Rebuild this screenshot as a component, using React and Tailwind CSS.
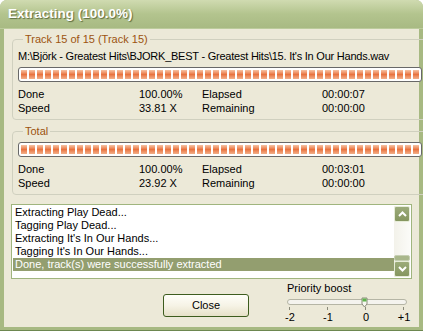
import React from 'react';

const font = { fontFamily: '"Liberation Sans", Arial, sans-serif' };

const ProgressBar = () => (
  <div className="h-[15px] rounded-[3px] border border-[#686868] bg-white p-[2px] overflow-hidden">
    <div className="flex h-full gap-[2px] overflow-hidden">
      {Array.from({ length: 50 }).map((_, i) => (
        <div
          key={i}
          className="w-[6px] h-full shrink-0 bg-gradient-to-b from-[#f6c3a3] via-[#e8733f] to-[#f2b08a]"
        />
      ))}
    </div>
  </div>
);

const StatRows = ({ rows }) => (
  <div className="mt-[5px]">
    {rows.map((r) => (
      <div key={r[0]} className="flex h-[14px] items-center text-[11px] text-black">
        <span className="w-[121px]">{r[0]}</span>
        <span className="w-[63px]">{r[1]}</span>
        <span className="w-[120px]">{r[2]}</span>
        <span>{r[3]}</span>
      </div>
    ))}
  </div>
);

const Group = ({ title, children }) => (
  <fieldset className="rounded-[4px] border border-[#d0d0bf] pl-[5px] pr-[7px] pb-[4px]">
    <legend className="ml-[5px] px-[2px] text-[11px] leading-[13px] text-[#9c5410]">{title}</legend>
    {children}
  </fieldset>
);

const ScrollBtn = ({ down }) => (
  <div className="w-[16px] h-[16px] rounded-[2px] border border-[#e6ecd8] bg-gradient-to-b from-[#9cab7a] to-[#85965f] flex items-center justify-center">
    <svg width="9" height="6" viewBox="0 0 9 6">
      <path
        d={down ? 'M1 1 L4.5 4.5 L8 1' : 'M1 5 L4.5 1.5 L8 5'}
        fill="none"
        stroke="white"
        strokeWidth="2"
      />
    </svg>
  </div>
);

export default function App() {
  const log = [
    'Extracting Play Dead...',
    'Tagging Play Dead...',
    "Extracting It's In Our Hands...",
    "Tagging It's In Our Hands...",
  ];

  return (
    <div style={font} className="w-[423px] h-[331px] flex flex-col bg-[#a7b982] rounded-t-[7px] overflow-hidden border-b border-[#6d8750]">
      {/* Title bar */}
      <div className="h-[29px] shrink-0 flex items-center pl-[8px] bg-gradient-to-b from-[#d0dbb1] via-[#b3c48e] to-[#a8ba83] border-b border-[#bccb9c]">
        <span className="text-[13.5px] font-bold text-white [text-shadow:1px_1px_1px_#5d6b40]">
          Extracting (100.0%)
        </span>
      </div>

      {/* Body */}
      <div className="flex-1 mx-[4px] mb-[3px] bg-[#ece9d8] flex flex-col pt-[4px] pl-[8px] pr-[7px]">
        <Group title="Track 15 of 15 (Track 15)">
          <div className="text-[11px] leading-[13px] text-black mt-[4px] mb-[4px] tracking-[-0.23px] whitespace-nowrap">
            M:\Björk - Greatest Hits\BJORK_BEST - Greatest Hits\15. It's In Our Hands.wav
          </div>
          <ProgressBar />
          <StatRows
            rows={[
              ['Done', '100.00%', 'Elapsed', '00:00:07'],
              ['Speed', '33.81 X', 'Remaining', '00:00:00'],
            ]}
          />
        </Group>

        <div className="mt-[5px]">
          <Group title="Total">
            <div className="mt-[4px]">
              <ProgressBar />
            </div>
            <StatRows
              rows={[
                ['Done', '100.00%', 'Elapsed', '00:03:01'],
                ['Speed', '23.92 X', 'Remaining', '00:00:00'],
              ]}
            />
          </Group>
        </div>

        {/* Log list */}
        <div className="mt-[9px] -ml-[1px] h-[75px] border border-[#a0b57e] bg-white flex">
          <div className="flex-1 pt-[1px] pl-[1px] text-[11px] leading-[13px] text-black">
            {log.map((l) => (
              <div key={l} className="h-[13px] pl-[2px]">{l}</div>
            ))}
            <div className="h-[13px] pl-[2px] bg-[#939e6f] text-white">
              Done, track(s) were successfully extracted
            </div>
          </div>
          <div className="w-[16px] my-[1px] mr-[1px] flex flex-col bg-gradient-to-r from-[#f3f2ea] to-[#fbfbf8]">
            <ScrollBtn />
            <div className="flex-1 flex flex-col justify-end">
              <div className="h-[6px] rounded-[2px] border border-[#c6cfb3] bg-[#a9b78b]" />
            </div>
            <ScrollBtn down />
          </div>
        </div>

        {/* Bottom row */}
        <div className="flex">
          <button className="shrink-0 ml-[151px] mt-[15px] w-[86px] h-[23px] rounded-[3px] border border-[#3d5c1e] bg-gradient-to-b from-[#fefef9] via-[#f6f3e6] to-[#e6e1c8] text-[11px] text-black">
            Close
          </button>
          <div className="shrink-0 ml-[38px] mt-[3px] text-[11px] text-black">
            <div className="leading-[13px]">Priority boost</div>
            <svg width="124" height="14" className="block mt-[2px] -ml-[1px]">
              <rect x="1.5" y="2.5" width="119" height="5" rx="2.5" fill="#f4f3ee" stroke="#b5b5a5" />
              <path d="M76 1 h5 v6 l-2.5 3 l-2.5 -3 z" fill="#f7f7f0" stroke="#8a8a7a" />
              <rect x="76.5" y="1.5" width="4" height="3" fill="#5fb34b" />
              <line x1="3.5" y1="10" x2="3.5" y2="13" stroke="#8a8a7a" />
              <line x1="41.5" y1="10" x2="41.5" y2="13" stroke="#8a8a7a" />
              <line x1="79.5" y1="10" x2="79.5" y2="13" stroke="#8a8a7a" />
              <line x1="117.5" y1="10" x2="117.5" y2="13" stroke="#8a8a7a" />
            </svg>
            <div className="grid grid-cols-[38px_38px_38px_38px] -ml-[16px] leading-[12px]">
              <span className="text-center">-2</span>
              <span className="text-center">-1</span>
              <span className="text-center">0</span>
              <span className="text-center">+1</span>
            </div>
          </div>
        </div>
      </div>
    </div>
  );
}
